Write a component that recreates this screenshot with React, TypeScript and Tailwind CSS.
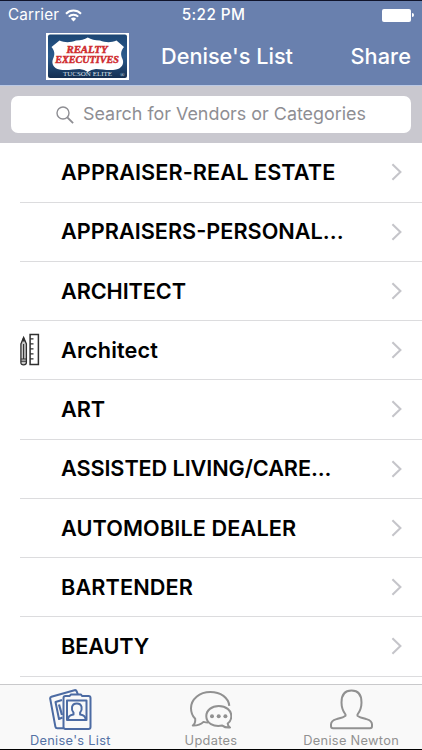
import React from "react";

const Chevron = () => (
  <svg className="h-[18px] w-[12px] shrink-0" viewBox="0 0 12 18" fill="none" stroke="#c5c5ca" strokeWidth="2.1">
    <path d="M1.4 1.2 9.4 9l-8 7.8" />
  </svg>
);

const PencilRuler = () => (
  <svg className="h-[34px] w-[20px]" viewBox="0 0 20 34" fill="none" stroke="#303030">
    <path d="M.9 11 3.6 4.4 6.4 11v18.6q0 2.2-2.8 2.2T.9 29.6Z" fill="#c9c9c9" strokeWidth="1.3" />
    <path d="M3.6 4.4 2.5 8h2.3Z" fill="#303030" />
    <path d="M.9 26h5.5M.9 28.2h5.5M3.6 11v15" strokeWidth="1.1" />
    <path d="M10.1 1.4h8.3v30h-8.3z" strokeWidth="1.5" />
    <path d="M10 5.8h3.5M10 10.8h3.5M10 15.8h3.5M10 20.8h3.5M10 25.8h3.5" strokeWidth="1.3" />
  </svg>
);

const Logo = () => (
  <svg className="h-[47px] w-[83px]" viewBox="0 0 83 47">
    <defs>
      <linearGradient id="navy" x1="0" y1="0" x2="0" y2="1">
        <stop offset="0" stopColor="#1c4674" />
        <stop offset=".5" stopColor="#2a5a8c" />
        <stop offset="1" stopColor="#152f52" />
      </linearGradient>
    </defs>
    <path fill="#fff" d="M0 0h83v47H0z" />
    <rect x="2" y="1.5" width="79" height="43.5" rx="2" fill="url(#navy)" />
    <path
      fill="#fff"
      d="M13.500 7.500C19 10 25 9.500 30 7.500 35 7.300 38.500 6.500 41.800 4.500 45 6.500 49 7.300 54 7.500 59 9.500 65 10 70.500 7.500L78 14C74.500 18 74.500 22 76.500 26 78.500 31 75.500 35.500 70 36.500 63 38 56 36 50 36 46.500 36.300 44 37.500 41.800 39 39.500 37.500 37 36.300 33.500 36 27.500 36 20.500 38 13.500 36.500 8 35.500 5 31 7 26 9 22 9 18 5.500 14Z"
    />
    <g fill="#cf2b2e" stroke="#cf2b2e" strokeWidth=".45" fontFamily="Liberation Serif, serif" fontWeight="700" fontStyle="italic">
      <text x="20.500" y="20.300" fontSize="10" textLength="41" lengthAdjust="spacingAndGlyphs">REALTY</text>
      <text x="9.300" y="30.200" fontSize="10" textLength="63.500" lengthAdjust="spacingAndGlyphs">EXECUTIVES</text>
    </g>
    <g fill="#dce4ed" fontFamily="Liberation Serif, serif">
      <text x="17" y="43.300" fontSize="6.500" textLength="49" lengthAdjust="spacingAndGlyphs">TUCSON ELITE</text>
      <text x="74" y="43.500" fontSize="6">®</text>
    </g>
  </svg>
);

const Wifi = () => (
  <svg className="h-[13px] w-[17px]" viewBox="0 0 17 13" fill="none" stroke="#fff" strokeWidth="2">
    <path d="M1 4.700a10.600 10.600 0 0 1 15 0M3.800 7.600a6.600 6.600 0 0 1 9.400 0" />
    <path d="m8.500 12.500-2.600-2.700a3.700 3.700 0 0 1 5.200 0Z" fill="#fff" stroke="none" />
  </svg>
);

const Cards = () => (
  <svg className="h-[42px] w-[43px]" viewBox="0 0 43 42" fill="none" stroke="#4c6ba3" strokeWidth="2" strokeLinejoin="round">
    <path d="M14 39.300H8.300q-1.600 0-1.900-1.500L1.200 9.800Q.9 8.300 2.400 7.800L25.500 1.200q1.600-.4 2.200 1.100l1.300 3.500" />
    <path d="M13.500 28.500 10 30 6.500 13l6.500-2" />
    <path d="M10 15.500 13 26" strokeWidth="2.200" />
    <path d="M14.500 28.500v9.500q0 2 2 2h23q2 0 2-2V9q0-2-2-2H33l-1-1.500H22L20.500 7h-4q-2 0-2 2Z" fill="#f9f9f9" />
    <path d="M18 11.500h19.500v19.500H18Z" />
    <path d="M19 30.500c0-3.500 2-4.500 5.500-5v-1.800c-2.500-3-2.500-9.200 3.300-9.200s5.800 6.200 3.300 9.200v1.800c3.500.5 5.500 1.500 5.500 5" />
  </svg>
);

const Bubbles = () => (
  <svg className="h-[38px] w-[42px]" viewBox="0 0 42 38" fill="none" stroke="#919191" strokeWidth="2" strokeLinejoin="round">
    <path d="M18 31.500q-2.300 0-4.500-.6c-2.500 2.500-6 3.800-10.700 3.700 1.800-1.500 2.700-4 2.400-6.800C2.500 25 1 21.300 1 17.200 1 8.200 9.500 1 20.300 1c10.500 0 18.200 5.800 19 13.800" />
    <path d="M28.800 15c7.200 0 12.500 4.300 12.500 10.200 0 3-1.400 5.600-3.600 7.400 0 1.800.8 3 2.300 3.900-3.200.3-5.700-.4-7.700-1.900-9 1.800-16-2.700-16-9.400C16.300 19.300 21.600 15 28.800 15Z" />
    <g fill="#919191" stroke="none">
      <circle cx="22" cy="25.300" r="2" />
      <circle cx="28.700" cy="25.300" r="2" />
      <circle cx="35.400" cy="25.300" r="2" />
    </g>
  </svg>
);

const Person = () => (
  <svg className="h-[41px] w-[43px]" viewBox="0 0 43 41" fill="none" stroke="#919191" strokeWidth="2" strokeLinejoin="round">
    <path d="M15.500 25.500C12.800 22 11.500 18 11.500 13.500 11.500 6 15 1.500 21.500 1.500s10 4.500 10 12c0 4.500-1.300 8.500-4 12v1.300c2 1.700 5 2.300 9 3.300 4 1.100 5.500 2.500 5.500 5.500v1.600q0 2-2 2H3q-2 0-2-2v-1.600c0-3 1.500-4.400 5.500-5.500 4-1 7-1.600 9-3.300Z" />
  </svg>
);

const rows = [
  { name: "APPRAISER-REAL ESTATE", track: "tracking-[0.07px]" },
  { name: "APPRAISERS-PERSONAL...", track: "tracking-[0px]" },
  { name: "ARCHITECT", track: "tracking-[-0.1px]" },
  { name: "Architect", track: "tracking-[0.1px]", icon: true },
  { name: "ART", track: "tracking-[-0.1px]" },
  { name: "ASSISTED LIVING/CARE...", track: "tracking-[-0.1px]" },
  { name: "AUTOMOBILE DEALER", track: "tracking-[0.1px]" },
  { name: "BARTENDER", track: "tracking-[0.1px]" },
  { name: "BEAUTY", track: "tracking-[-0.1px]" },
];

export default function App() {
  return (
    <div className="flex h-[750px] w-[422px] flex-col overflow-hidden bg-white font-['Inter',sans-serif]">
      <header className="h-[85px] shrink-0 border-t border-[#10142b] bg-[#6980ae] text-white">
        <div className="grid h-[28px] grid-cols-3 items-center pl-[8px] pr-[8px] text-[15.3px]">
          <div className="flex items-center gap-[6px]">
            <span className="tracking-[0.15px]">Carrier</span>
            <Wifi />
          </div>
          <span className="whitespace-nowrap pl-[5px] text-center font-medium tracking-[0.4px]">5:22 PM</span>
          <div className="flex items-center justify-end gap-px">
            <div className="h-[13px] w-[29px] rounded-[2px] bg-white" />
            <div className="h-[4px] w-[2px] rounded-r-full bg-white" />
          </div>
        </div>
        <div className="flex h-[55px] items-center pl-[46px] pr-[11px] text-[21.7px]">
          <Logo />
          <h1 className="ml-[32px] whitespace-nowrap font-medium">Denise's List</h1>
          <button className="ml-auto font-medium tracking-[0.1px]">Share</button>
        </div>
      </header>

      <div className="h-[58px] shrink-0 border-t border-[#bac8e4] bg-[#c9c8cf] px-[11px] pt-[10px]">
        <div className="flex h-[37px] items-center rounded-[7px] bg-white pl-[45px] text-[#8e8e93]">
          <svg className="h-[18px] w-[18px]" viewBox="0 0 18 18" fill="none" stroke="#8e8e93" strokeWidth="1.400">
            <circle cx="7" cy="7" r="6" />
            <path d="m11.300 11.300 5.800 5.800" strokeWidth="1.900" />
          </svg>
          <span className="ml-[9px] whitespace-nowrap text-[17.9px]">Search for Vendors or Categories</span>
        </div>
      </div>

      <main className="min-h-0 flex-1 overflow-hidden pt-[0.3px]">
        {rows.map((row) => (
          <div key={row.name} className="flex h-[59.25px] pl-[20px]">
            <div className="flex flex-1 items-center border-b border-[#dcdcde] pr-[19px]">
              <div className="w-[41px]">{row.icon && <PencilRuler />}</div>
              <span className={`flex-1 whitespace-nowrap text-[21.7px] font-semibold text-black ${row.track}`}>{row.name}</span>
              <Chevron />
            </div>
          </div>
        ))}
      </main>

      <footer className="grid h-[66px] shrink-0 grid-cols-3 border-b border-t border-b-black border-t-[#c9c9cb] bg-[#f9f9f9] text-[12.8px] leading-[16px] tracking-[0.3px] text-[#919191]">
        <div className="flex flex-col items-center pt-[4px] text-[#5471a5]">
          <Cards />
          <span className="mt-[2px]">Denise's List</span>
        </div>
        <div className="flex flex-col items-center pt-[6px]">
          <Bubbles />
          <span className="mt-[4px]">Updates</span>
        </div>
        <div className="flex flex-col items-center pr-[1px] pt-[4px]">
          <Person />
          <span className="mt-[3px]">Denise Newton</span>
        </div>
      </footer>
    </div>
  );
}
